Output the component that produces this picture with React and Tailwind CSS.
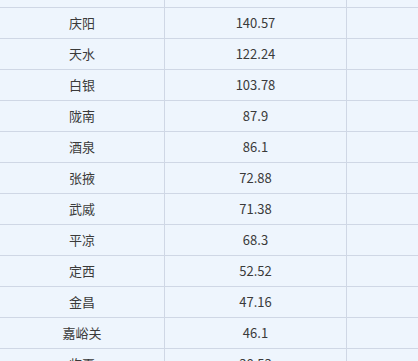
import React from "react";

const rows = [
  ["", ""],
  ["庆阳", "140.57"],
  ["天水", "122.24"],
  ["白银", "103.78"],
  ["陇南", "87.9"],
  ["酒泉", "86.1"],
  ["张掖", "72.88"],
  ["武威", "71.38"],
  ["平凉", "68.3"],
  ["定西", "52.52"],
  ["金昌", "47.16"],
  ["嘉峪关", "46.1"],
  ["临夏", "38.53"],
];

const App = () => {
  return (
    <div className="w-[418px] h-[361px] overflow-hidden bg-[#eef5fd] text-[13px] text-[#3a3a3a] font-['Noto_Sans_CJK_SC','Microsoft_YaHei',sans-serif]">
      {/* TABLE BODY (scrolled) */}
      <div className="-mt-[23px]">
        {rows.map(([city, value], i) => (
          <div key={i} className="flex h-[31px] border-b border-[#cfd7e5]">
            <div className="w-[165px] shrink-0 flex items-center justify-center border-r border-[#cfd7e5]">
              {city}
            </div>
            <div className="w-[182px] shrink-0 flex items-center justify-center border-r border-[#cfd7e5]">
              {value}
            </div>
            <div className="flex-1" />
          </div>
        ))}
      </div>
    </div>
  );
};

export default App;
